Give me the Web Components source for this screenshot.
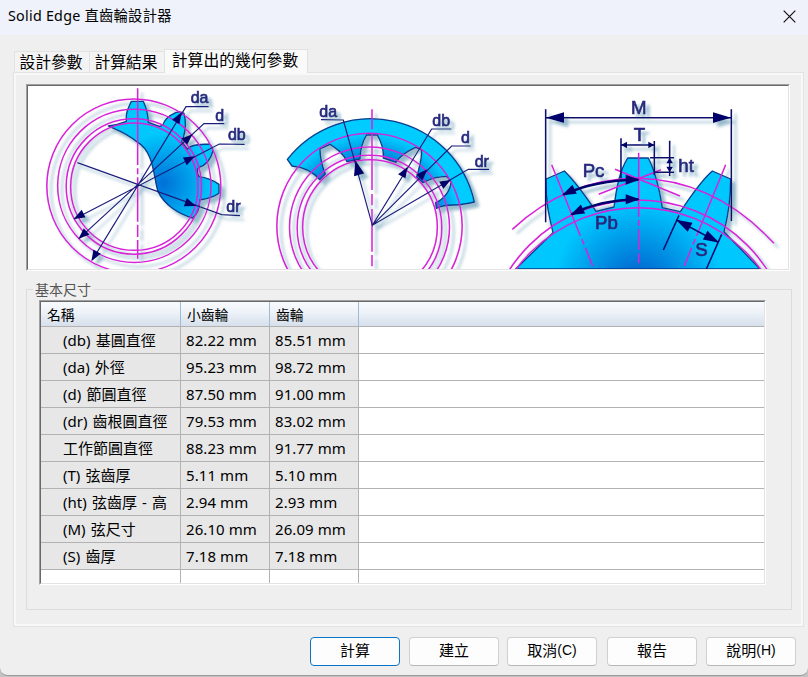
<!DOCTYPE html>
<html lang="zh-Hant">
<head>
<meta charset="utf-8">
<title>Solid Edge 直齒輪設計器</title>
<style>
html,body{margin:0;width:808px;height:677px;overflow:hidden;background:#c3c3c3}
body{font-family:"Noto Sans","Noto Sans CJK TC",sans-serif;color:#000}
</style>
</head>
<body>
<gear-dialog heading="Solid Edge 直齒輪設計器">
  <tab-strip slot="tabs">
    <tab-item>設計參數</tab-item><tab-item>計算結果</tab-item><tab-item active>計算出的幾何參數</tab-item>
  </tab-strip>
  <gear-diagrams></gear-diagrams>
  <group-box label="基本尺寸"><data-grid></data-grid></group-box>
  <push-button slot="actions" primary>計算</push-button>
  <push-button slot="actions">建立</push-button>
  <push-button slot="actions" style="margin-left:-1px">取消<span>(C)</span></push-button>
  <push-button slot="actions" style="margin-left:1px">報告</push-button>
  <push-button slot="actions">說明<span>(H)</span></push-button>
</gear-dialog>
<script>
const define = (name, render) => customElements.define(name, class extends HTMLElement {
  constructor() {
    super();
    this.attachShadow({mode: 'open'});
  }
  connectedCallback() {
    this.shadowRoot.innerHTML = render(this);
  }
});

define('gear-dialog', el => `
<style>
:host{display:flex;flex-direction:column;box-sizing:border-box;width:808px;height:676px;background:#efefef;border-bottom:1px solid #999;border-radius:0 0 8px 8px;overflow:hidden}
header{flex:none;height:35px;background:#eff2fa;display:flex;align-items:center;justify-content:space-between;padding:0 12px 0 8px;box-sizing:border-box}
h1{margin:0;font-size:14.3px;letter-spacing:.25px;font-weight:400;line-height:20px;margin-top:-4px;white-space:nowrap}
header svg{display:block;margin-top:-3px}
main{flex:none;padding:14px 4px 0 13px}
.page{box-sizing:border-box;width:791px;height:555px;border:1px solid #e2e2e2;box-shadow:inset 0 0 0 2px #f8f8f8;padding:11px 11px 0 12px}
footer{display:flex;gap:9px;padding:10px 12px 0 0;justify-content:flex-end}
</style>
<header><h1>${el.getAttribute('heading')}</h1>
<svg width="13" height="13" viewBox="0 0 13 13"><path d="M.7.7 12.3 12.3M12.3.7.7 12.3" stroke="#111" stroke-width="1.2"/></svg></header>
<main><slot name="tabs"></slot><div class="page"><slot></slot></div></main>
<footer><slot name="actions"></slot></footer>`);

define('tab-strip', () => `
<style>:host{display:flex;align-items:flex-end;height:23px;padding-left:1px;position:relative;z-index:1}</style><slot></slot>`);

define('tab-item', () => `
<style>
:host{box-sizing:border-box;display:flex;justify-content:center;align-items:center;width:76px;height:21px;margin-right:-1px;border:1px solid #e2e2e2;border-bottom:0;background:#f3f3f3;font:15.8px/20px "Noto Sans CJK TC",sans-serif;white-space:nowrap;padding:0 2px 1px 0}
:host([active]){width:144px;height:24px;margin-bottom:-1px;background:#fafafa;padding:0 2px 4px 0}
</style><slot></slot>`);

define('push-button', () => `
<style>
:host{box-sizing:border-box;display:flex;justify-content:center;align-items:center;width:90px;height:29px;border:1px solid #d0d0d0;border-bottom-color:#b8b8b8;border-radius:4px;background:#fdfdfd;font:15px/20px "Noto Sans CJK TC",sans-serif;padding-bottom:3px;white-space:nowrap}
:host([primary]){border-color:#0a74c8}
::slotted(span){font:14px/20px "Liberation Sans",sans-serif}
</style><slot></slot>`);

define('group-box', el => `
<style>
:host{display:block;margin-top:10px}
fieldset{box-sizing:border-box;margin:0;width:766px;height:329px;border:1px solid #dcdcdc;padding:2px 0 0 12px;min-width:0}
legend{font-size:14px;line-height:17px;height:17px;color:#555;padding:0 2px;margin-left:-6px}
</style>
<fieldset><legend>${el.getAttribute('label')}</legend><slot></slot></fieldset>`);

const ROWS = [
  ['(db) 基圓直徑', '82.22 mm', '85.51 mm'],
  ['(da) 外徑', '95.23 mm', '98.72 mm'],
  ['(d) 節圓直徑', '87.50 mm', '91.00 mm'],
  ['(dr) 齒根圓直徑', '79.53 mm', '83.02 mm'],
  ['工作節圓直徑', '88.23 mm', '91.77 mm'],
  ['(T) 弦齒厚', '5.11 mm', '5.10 mm'],
  ['(ht) 弦齒厚 - 高', '2.94 mm', '2.93 mm'],
  ['(M) 弦尺寸', '26.10 mm', '26.09 mm'],
  ['(S) 齒厚', '7.18 mm', '7.18 mm'],
  ['', '', '']
];

define('data-grid', () => `
<style>
:host{box-sizing:border-box;display:block;width:727px;height:285px;border:1px solid;border-color:#a0a0a0 #fff #fff #a0a0a0}
.inner{box-sizing:border-box;width:725px;height:283px;border:1px solid;border-color:#696969 #e3e3e3 #e3e3e3 #696969;background:#fff;overflow:hidden}
.row{display:grid;grid-template-columns:140px 89px 89px 1fr;height:27px}
.row>*{box-sizing:border-box;height:27px;border-bottom:1px solid #b2b2b2;border-right:1px solid #b2b2b2;font-size:15px;letter-spacing:.08px;line-height:27px;padding-left:5px;white-space:nowrap;background:#e7e7e7}
.row>:first-child{padding-left:22px;font-size:15px;letter-spacing:0;word-spacing:1.3px}
.row>:last-child{border-right:0;background:#fff}
.blank>*{background:#fff}
.head{height:25px}
.head>*,.head>:last-child{height:25px;background:linear-gradient(#f8fbfe,#edf2f8 45%,#d6dfeb);border-right-color:#9ebbd6;font-size:13.8px;letter-spacing:0;line-height:25px;padding-left:6px}
.head>:first-child{padding-left:6px;font-size:13.8px}
</style>
<div class="inner"><div class="row head"><span>名稱</span><span>小齒輪</span><span>齒輪</span><span></span></div>
${ROWS.map(r => `<div class="row${r[0] ? '' : ' blank'}">${r.map(c => `<span>${c}</span>`).join('')}<span></span></div>`).join('')}</div>`);

const label = (x, y, t) => `<text x="${x}" y="${y}">${t}</text>`;
const head = (x, y, fx, fy, len = 34, w = 13) => {
  const d = Math.hypot(x - fx, y - fy), ux = (x - fx) / d, uy = (y - fy) / d;
  const bx = x - ux * len, by = y - uy * len;
  return `<path class="h" d="M${x} ${y}L${bx - uy * w} ${by + ux * w}L${bx + uy * w} ${by - ux * w}Z"/>`;
};
const circles = list => list.map(([x, y, r]) => `<circle class="m" cx="${x}" cy="${y}" r="${r}"/>`).join('');

define('gear-diagrams', () => `
<style>
:host{box-sizing:border-box;display:block;width:764px;height:187px;border:1px solid;border-color:#a0a0a0 #fff #fff #a0a0a0}
.inner{box-sizing:border-box;width:762px;height:185px;border:1px solid;border-color:#696969 #e3e3e3 #e3e3e3 #696969;background:#fff}
svg{display:block}
.m{fill:none;stroke:#d822d8;stroke-width:4.6}
.n{fill:none;stroke:#1c1c7c;stroke-width:3.6}
.k{stroke:#08086c;stroke-width:4.6}
.a{stroke:#04046a;stroke-width:7.5}
.b{stroke:#083c8c;stroke-width:4;stroke-linejoin:round}
.h{fill:#04046a}
text{font:48px "Liberation Sans",Arial,sans-serif;fill:#28287e;stroke:#28287e;stroke-width:2}
.big text{font-size:56px}
</style>
<div class="inner"><svg width="760" height="183" viewBox="28 86 760 183">
<defs>
<filter id="s" filterUnits="userSpaceOnUse" x="-20" y="0" width="960" height="640"><feDropShadow dx="13" dy="13" stdDeviation="5" flood-color="#6c9fb8" flood-opacity=".7"/></filter>
<radialGradient id="g1" gradientUnits="userSpaceOnUse" cx="430" cy="310" r="150"><stop stop-color="#0070d8"/><stop offset="1" stop-color="#00c8fc"/></radialGradient>
<radialGradient id="g2" gradientUnits="userSpaceOnUse" cx="328" cy="438" r="316"><stop offset=".66" stop-color="#0084dc"/><stop offset=".87" stop-color="#00ccff"/></radialGradient>
<radialGradient id="g3" gradientUnits="userSpaceOnUse" cx="415" cy="620" r="320"><stop stop-color="#0058c8"/><stop offset=".8" stop-color="#00c8ff"/></radialGradient>
</defs>
<g transform="translate(20 80) scale(.33333)"><g filter="url(#s)">
<path class="b" fill="url(#g1)" d="M265 138Q295 134 319 124C316 98 325 84 334 64H370C380 86 384 98 385 127L418 139L428 136C434 116 449 106 467 98Q482 92 492 100C499 125 497 150 490 173L485 185L502 207C515 192 540 194 568 192Q576 195 579 213C573 235 560 255 536 263Q528 272 537 290C557 292 572 296 597 313V340C579 353 562 357 539 360C540 382 532 402 518 414C473 402 433 373 414 335C400 290 403 215 350 185C322 160 292 150 265 138Z"/>
${circles([[341.5, 318, 261], [343, 317.5, 230], [341.5, 319.5, 203], [343, 320, 191]])}
<path class="m" d="M353 25V255M353 265V283M353 292V425M353 434V471M353 480V536"/>
<path class="n" d="M566 80H498L217 540M613 131H552L178 475M674 193L598 192L163 417M172 248L605 404L660 407"/>
${head(485, 97, 352, 315)}${head(214, 544, 352, 315)}${head(518, 162, 352, 315)}${head(175, 477, 352, 315)}${head(525, 229, 352, 315)}${head(161, 417, 352, 315)}${head(528, 378, 352, 315)}
${label(512, 69, 'da')}${label(586, 122, 'd')}${label(624, 181, 'db')}${label(619, 395, 'dr')}
</g></g>
<g transform="translate(260 80) scale(.33333)"><g filter="url(#s)">
<path class="b" fill="url(#g2)" d="M82 238A318 318 0 0 1 643 366Q610 374 585 375Q553 374 529 385L527 368C553 356 572 330 573 305L560 289C535 289 515 294 489 308L470 291C478 260 488 232 484 210L467 202C442 213 423 224 408 247L370 234C372 205 362 183 352 165H320C307 185 301 209 300 237L261 245C250 220 230 207 210 193L180 207C180 234 186 257 196 282L179 299C151 266 120 260 96 258Z"/>
${circles([[328.5, 438, 278], [328.5, 441, 240], [328.5, 443, 217], [330, 441, 202]])}
<path class="m" d="M336 88V148M336 158V330M336 342V376M336 387V515M336 525V559"/>
<path class="n" d="M183 119L250 120L337 436L515 147H574M632 198H575L337 436L625 268H687"/>
${head(286, 240, 337, 436, 46, 16)}${head(443, 260, 337, 436)}${head(502, 268, 337, 436)}${head(573, 299, 337, 436)}
${label(178, 111, 'da')}${label(517, 138, 'db')}${label(603, 190, 'd')}${label(644, 261, 'dr')}
</g></g>
<g class="big" transform="translate(500 80) scale(.33333)"><g filter="url(#s)">
<path class="b" fill="url(#g3)" d="M47 567L159 458C146 404 137 365 138 297L193 273C228 306 254 345 288 394L342 381C350 320 358 275 383 234H445C466 275 478 325 487 383L541 395C575 344 605 300 637 273L692 297C692 360 685 406 672 455L780 567Z"/>
<circle class="m" cx="415" cy="840" r="457"/><circle class="m" cx="415" cy="822" r="462"/>
<path class="m" d="M37 448Q203 295 415 295Q646 300 822 490"/>
<path class="m" d="M345 268L540 348M296 343L483 269M416 218V410M416 420V438M416 448V510M416 520V550M155 254L241 467M245 477L252 493M256 503L278 558M677 254L590 467M586 477L579 493M575 503L553 558"/>
<path class="n k" d="M137 88V427M694 88V423M137 113H694M363 175V295M463 183V285M363 195H463M450 233H522M465 277H522M509 182V288M537 406L490 510M665 463L619 567M530 420L655 487"/>
<path class="n a" d="M190 344Q285 300 415 299M215 403Q300 360 415 358"/>
${head(137, 113, 300, 113, 55, 16)}${head(694, 113, 400, 113, 55, 16)}${head(363, 195, 400, 195, 18, 10)}${head(463, 195, 400, 195, 18, 10)}${head(509, 233, 509, 260, 17, 10)}${head(509, 277, 509, 250, 17, 10)}
${head(186, 346, 240, 320, 42, 15)}${head(419, 299, 350, 299, 42, 15)}${head(211, 405, 260, 382, 42, 15)}${head(419, 358, 350, 358, 42, 15)}${head(528, 419, 655, 487, 48, 15)}${head(658, 488, 528, 419, 48, 15)}
${label(393, 103, 'M')}${label(401, 184, 'T')}${label(535, 276, 'ht')}${label(248, 292, 'Pc')}${label(285, 446, 'Pb')}${label(586, 529, 'S')}
</g></g>
</svg></div>`);
</script>
</body>
</html>
